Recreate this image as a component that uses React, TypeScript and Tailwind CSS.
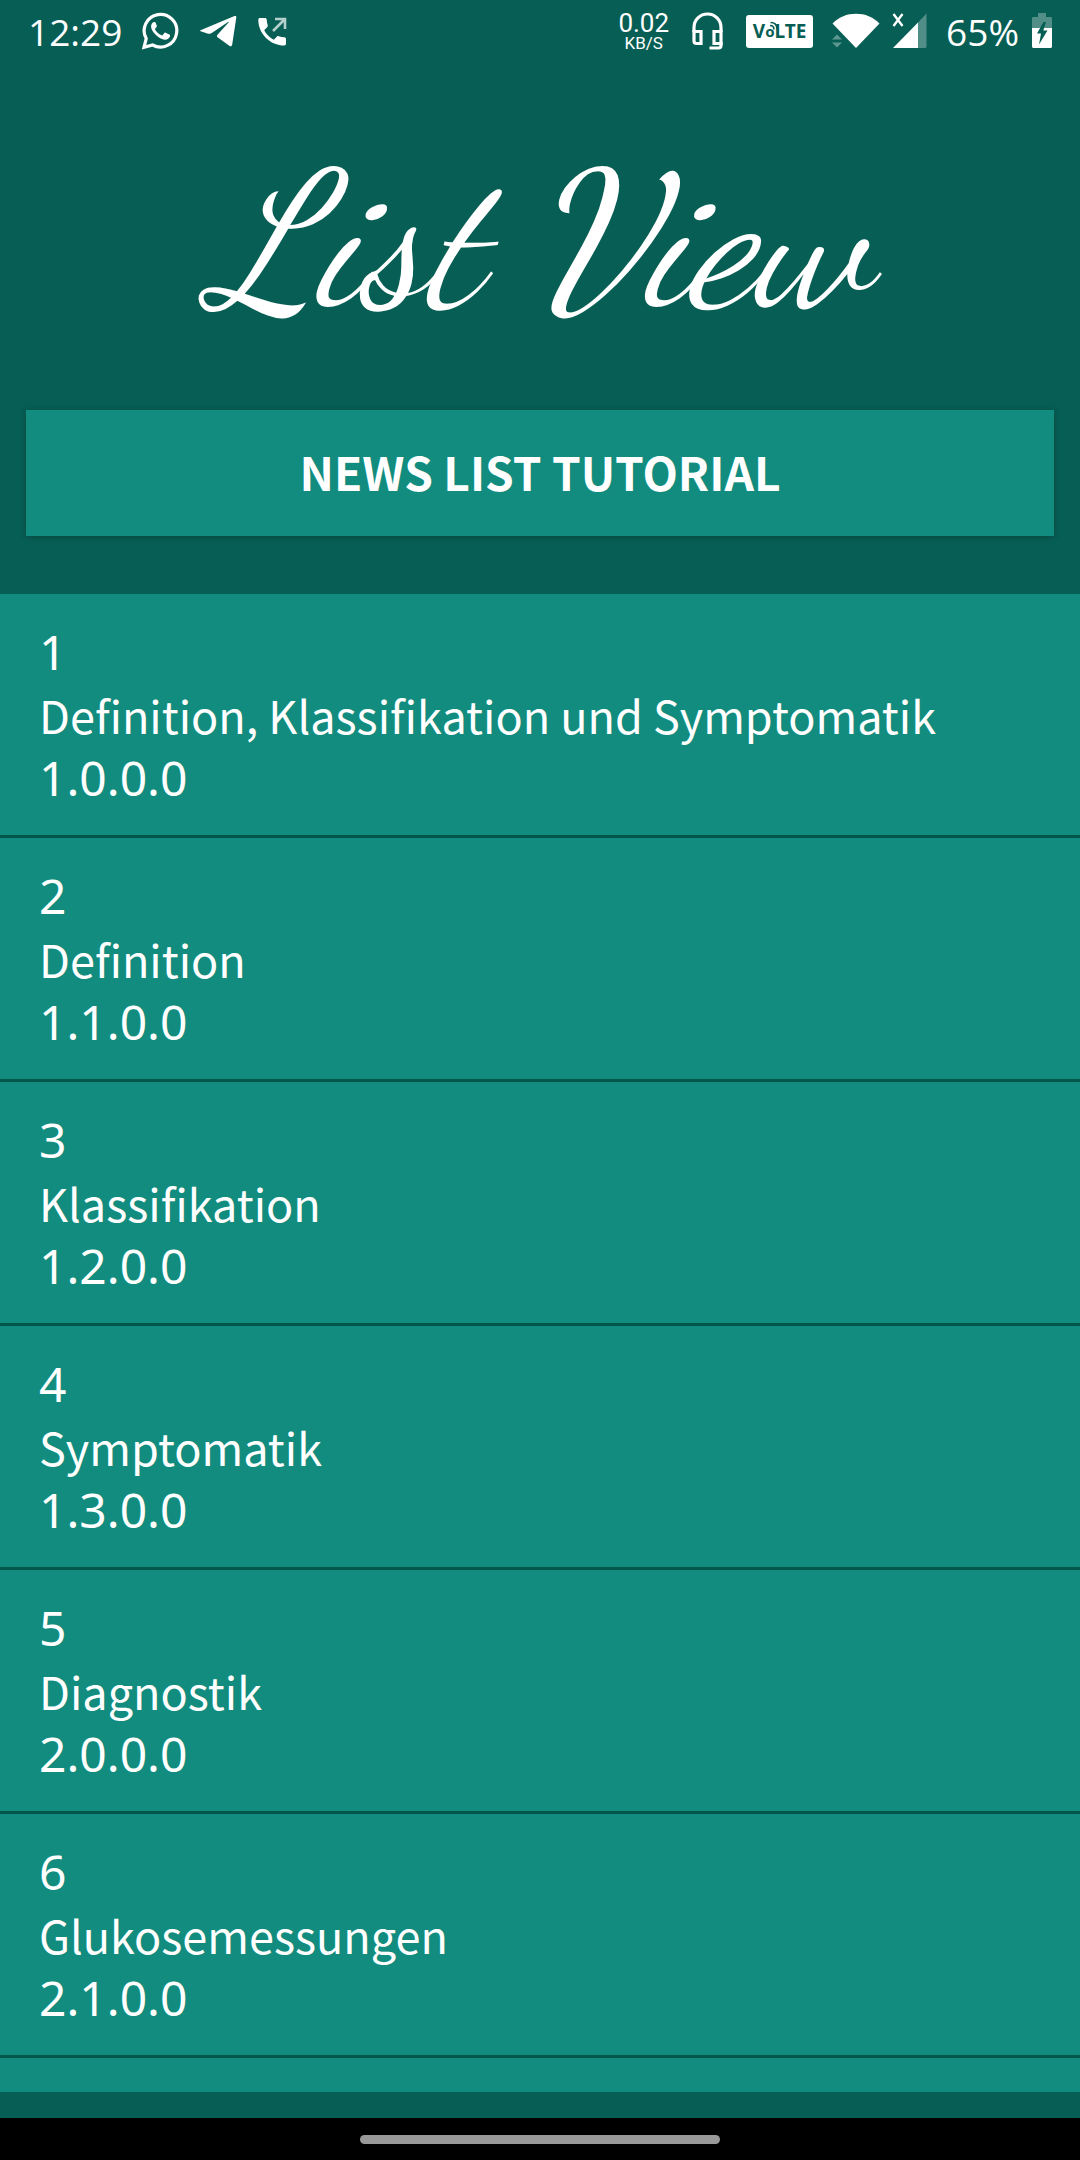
const entries = [
  { id: 1, title: 'Definition, Klassifikation und Symptomatik', code: '1.0.0.0' },
  { id: 2, title: 'Definition', code: '1.1.0.0' },
  { id: 3, title: 'Klassifikation', code: '1.2.0.0' },
  { id: 4, title: 'Symptomatik', code: '1.3.0.0' },
  { id: 5, title: 'Diagnostik', code: '2.0.0.0' },
  { id: 6, title: 'Glukosemessungen', code: '2.1.0.0' },
];

function WhatsAppIcon() {
  return (
    <svg width="37" height="38" viewBox="0 0 37 38" fill="none" aria-hidden="true">
      <path
        d="M4.2 26.6A16.3 16.3 0 1 1 10.6 33L2 35.4Z"
        stroke="#fff"
        strokeWidth="3.2"
        strokeLinejoin="miter"
      />
      <path
        d="M12.4 10c-.7 0-1.3.2-1.8.8-.9 1-1.6 2.300-1.500 4 .1 2.500 1.900 5.200 4.600 8 2.900 2.800 6.200 4.800 9.300 5 2 .1 4.500-1.500 4.900-3.300.2-.9.2-1.600-.1-1.800l-4.200-2c-.5-.2-.9-.1-1.200.3l-1.700 2.100c-.3.4-.7.4-1.200.2-2.700-1.200-4.800-3-6.300-5.600-.2-.4-.2-.8.1-1.100l1.400-1.800c.2-.3.2-.6.1-1L13.500 10.500c-.2-.4-.6-.5-1.100-.5Z"
        fill="#fff"
      />
    </svg>
  );
}

function TelegramIcon() {
  return (
    <svg width="38" height="34" viewBox="0 0 38 34" fill="#fff" aria-hidden="true">
      <path d="M1.500 16.200 35.500 2.100c1.300-.5 2 .1 1.800 1.500L33.200 30.600c-.3 1.800-1.500 2.200-2.900 1.200l-11.400-8.300c-1.200-.9-1.300-1.900-.2-3.100L29.500 8.600c.6-.7.2-1-.5-.5L13.500 18.600c-2 1.400-3.300 1.500-5.100.9l-6.700-2.200c-.8-.3-.9-.8-.2-1.100Z" />
    </svg>
  );
}

function OutgoingCallIcon() {
  return (
    <svg width="31" height="31" viewBox="0 0 31 31" fill="none" aria-hidden="true">
      <path
        d="M3 2h5c1 0 1.600.6 1.700 1.600.1 2 .5 3.900 1 5.600.2.700.1 1.300-.4 1.800L7.200 14.200c2.200 4.200 5.500 7.400 9.600 9.500l3.200-3.100c.5-.5 1.100-.6 1.800-.4 1.700.5 3.500.9 5.500 1 1 .1 1.700.7 1.700 1.700v4.900c0 1-.7 1.700-1.700 1.700C13.200 29.500 1.300 17.700 1.300 3.700 1.300 2.700 2 2 3 2Z"
        fill="#fff"
      />
      <path d="M16 15 27.500 3.500M18 3h10v10" stroke="#fff" strokeOpacity=".7" strokeWidth="2.600" />
    </svg>
  );
}

function HeadsetIcon() {
  return (
    <svg width="31" height="38" viewBox="0 0 31 38" fill="none" stroke="#fff" strokeWidth="3.200" aria-hidden="true">
      <path d="M2 20v-4.500a13.500 13.500 0 0 1 27 0V20" />
      <path d="M2 19.500h7v12H4.500A2.500 2.500 0 0 1 2 29Z" />
      <path d="M29 19.500h-7v12h7Z" />
      <path d="M29 30v3.500a2.500 2.500 0 0 1-2.500 2.500H17.500" />
    </svg>
  );
}

function VolteBadge() {
  return (
    <div className="flex h-[33px] w-[67px] items-center justify-center rounded-[3px] bg-white font-['Noto_Sans',sans-serif] text-[19px] leading-none font-bold text-[#075e54]">
      <span>V</span>
      <span className="relative text-[15px]">
        o
        <svg className="absolute -top-1 left-1" width="12" height="12" viewBox="0 0 12 12" fill="none" stroke="#075e54" strokeWidth="1.600" aria-hidden="true">
          <path d="M1 5.500c2.500 0 4 1.500 4 4M1.500 2.500C5.500 2.500 8 5 8 9" />
        </svg>
      </span>
      <span>LTE</span>
    </div>
  );
}

function WifiIcon() {
  return (
    <svg width="48" height="36" viewBox="0 0 48 36" fill="#fff" aria-hidden="true">
      <path d="M.500 10.500C7 4 15 .800 24 .800s17 3.200 23.500 9.700L24 35Z" />
      <path d="m5 21.500 5 5H0ZM0 29.500h10l-5 5Z" fillOpacity=".35" />
    </svg>
  );
}

function SignalIcon() {
  return (
    <svg width="35" height="36" viewBox="0 0 35 36" fill="#fff" aria-hidden="true">
      <path d="M1 35 26 9.500V35Z" />
      <path d="M26 9.500 34.500.500V33.500A1.500 1.500 0 0 1 33 35H26Z" fillOpacity=".3" />
      <path d="m1.500 1 9 12M10.500 1l-9 12" stroke="#fff" strokeWidth="2.400" />
    </svg>
  );
}

function BatteryIcon() {
  return (
    <svg width="20" height="36" viewBox="0 0 20 36" fill="#fff" aria-hidden="true">
      <path d="M0 15V5.500C0 4.500.600 4 1.500 4H6V0h8v4h4.500c.9 0 1.500.5 1.500 1.500V15Z" fillOpacity=".3" />
      <path d="M0 15h20v18.500c0 .9-.6 1.500-1.500 1.500h-17C.6 35 0 34.400 0 33.500Z" />
      <path d="M11.500 9 5 20.500h4L7 31.500 15.500 17.500H11.300L14 9Z" fill="#075e54" />
    </svg>
  );
}

function StatusBar() {
  return (
    <header className="flex h-[62px] items-center justify-between px-7 text-white">
      <div className="flex items-center gap-5">
        <time className="font-['Open_Sans',sans-serif] text-[37px] leading-none">12:29</time>
        <WhatsAppIcon />
        <TelegramIcon />
        <OutgoingCallIcon />
      </div>
      <div className="flex items-center">
        <div className="mr-[23px] flex flex-col items-center font-['Roboto',sans-serif]">
          <span className="text-[26px] leading-[24px]">0.02</span>
          <span className="text-[17px] leading-[16px]">KB/S</span>
        </div>
        <div className="mr-[23px]">
          <HeadsetIcon />
        </div>
        <div className="mr-[19px]">
          <VolteBadge />
        </div>
        <div className="mr-3">
          <WifiIcon />
        </div>
        <div className="mr-[19px]">
          <SignalIcon />
        </div>
        <span className="mr-[13px] font-['Open_Sans',sans-serif] text-[37px] leading-none">65%</span>
        <BatteryIcon />
      </div>
    </header>
  );
}

export default function App() {
  return (
    <div className="flex min-h-screen flex-col bg-[#075e54] text-white">
      <StatusBar />
      <h1 className="pt-[86px] pb-[74px] text-center font-['Dancing_Script',cursive] text-[189px] leading-[188px] whitespace-nowrap italic">
        List View
      </h1>
      <div className="px-[26px] pb-[58px]">
        <button
          type="button"
          className="h-[126px] w-full bg-[#128c7e] pb-1 font-['Noto_Sans_CJK_SC',sans-serif] text-[46px] leading-[64px] font-bold shadow-[0_1px_6px_rgba(0,0,0,0.25)]"
        >
          NEWS LIST TUTORIAL
        </button>
      </div>
      <main className="flex-1 bg-[#128c7e]">
        <ul>
          {entries.map((entry) => (
            <li key={entry.id} className="border-b-3 border-[#00564b] px-[39px] py-[26px]">
              <p className="font-['Noto_Sans',sans-serif] text-[48px] leading-[63px]">{entry.id}</p>
              <p className="font-['Noto_Sans_CJK_SC',sans-serif] text-[45px] leading-[63px]">{entry.title}</p>
              <p className="font-['Noto_Sans',sans-serif] text-[48px] leading-[63px]">{entry.code}</p>
            </li>
          ))}
        </ul>
      </main>
      <div className="h-[26px]" />
      <nav className="flex h-[42px] items-center justify-center bg-black">
        <button type="button" aria-label="Home" className="h-[9px] w-1/3 rounded-full bg-[#999999]" />
      </nav>
    </div>
  );
}
